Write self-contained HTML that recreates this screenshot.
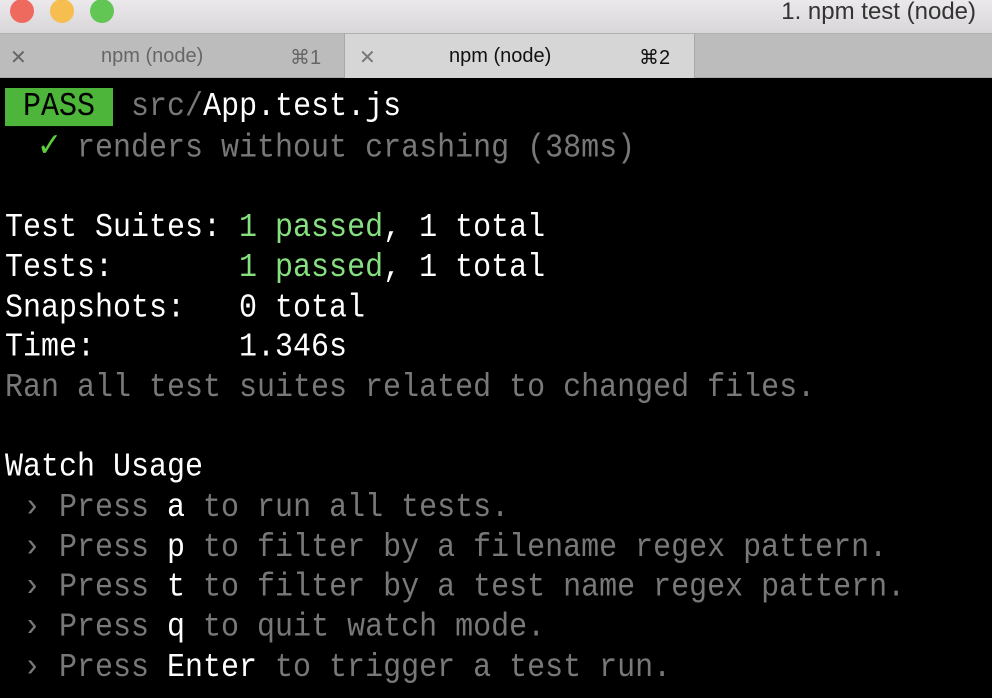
<!DOCTYPE html>
<html><head><style>
*{margin:0;padding:0;box-sizing:border-box}
body{width:992px;height:698px;overflow:hidden;background:#000;font-family:"Liberation Sans",sans-serif}
#title{position:absolute;left:0;top:0;width:992px;height:34px;background:linear-gradient(#ebe9eb,#d8d6d8);border-bottom:1px solid #b0b0b0}
.dot{position:absolute;top:0;width:24px;height:24px;border-radius:50%;top:-1px}
#title .t{position:absolute;right:16px;top:-2px;font-size:24px;color:#333}
#tabs{position:absolute;left:0;top:34px;width:992px;height:44px;background:#bcbcbc;border-bottom:1px solid #a8a8a8}
.tab{position:absolute;top:0;height:44px;font-size:20px;color:#666}
.tab span{position:absolute;top:11px}
#term{position:absolute;left:5px;top:88px;font-family:"Liberation Mono",monospace;font-size:30px;letter-spacing:0px;line-height:35.7px;color:#fff;white-space:pre;transform:scaleY(1.12);transform-origin:0 0}
.g{color:#787878}.gr{color:#86e07f}.w{color:#fff}
.pass{background:#4cb53a;color:#000}
.ck{color:#5fcf3b;display:inline-block;width:54px;padding-left:16px;font-size:34px}
</style></head><body>
<div id="title">
<div class="dot" style="left:10px;background:#ee6a5f"></div>
<div class="dot" style="left:50px;background:#f5be4f"></div>
<div class="dot" style="left:90px;background:#62c655"></div>
<div class="t">1. npm test (node)</div>
</div>
<div id="tabs">
<div class="tab" style="left:0;width:345px;border-right:1px solid #a8a8a8"><span style="left:10px">✕</span><span style="left:101px">npm (node)</span><span style="left:290px">⌘1</span></div>
<div class="tab" style="left:345px;width:350px;background:#d6d6d6;color:#111;border-right:1px solid #a8a8a8"><span style="left:14px;color:#777">✕</span><span style="left:104px">npm (node)</span><span style="left:294px">⌘2</span></div>
</div>
<div id="term"><span class="pass"> PASS </span> <span class="g">src/</span>App.test.js
 <span class="ck">✓</span><span class="g">renders without crashing (38ms)</span>

Test Suites: <span class="gr">1 passed</span>, 1 total
Tests:       <span class="gr">1 passed</span>, 1 total
Snapshots:   0 total
Time:        1.346s
<span class="g">Ran all test suites related to changed files.</span>

Watch Usage
<span class="g"> › Press </span>a<span class="g"> to run all tests.</span>
<span class="g"> › Press </span>p<span class="g"> to filter by a filename regex pattern.</span>
<span class="g"> › Press </span>t<span class="g"> to filter by a test name regex pattern.</span>
<span class="g"> › Press </span>q<span class="g"> to quit watch mode.</span>
<span class="g"> › Press </span>Enter<span class="g"> to trigger a test run.</span>
</div>
</body></html>
